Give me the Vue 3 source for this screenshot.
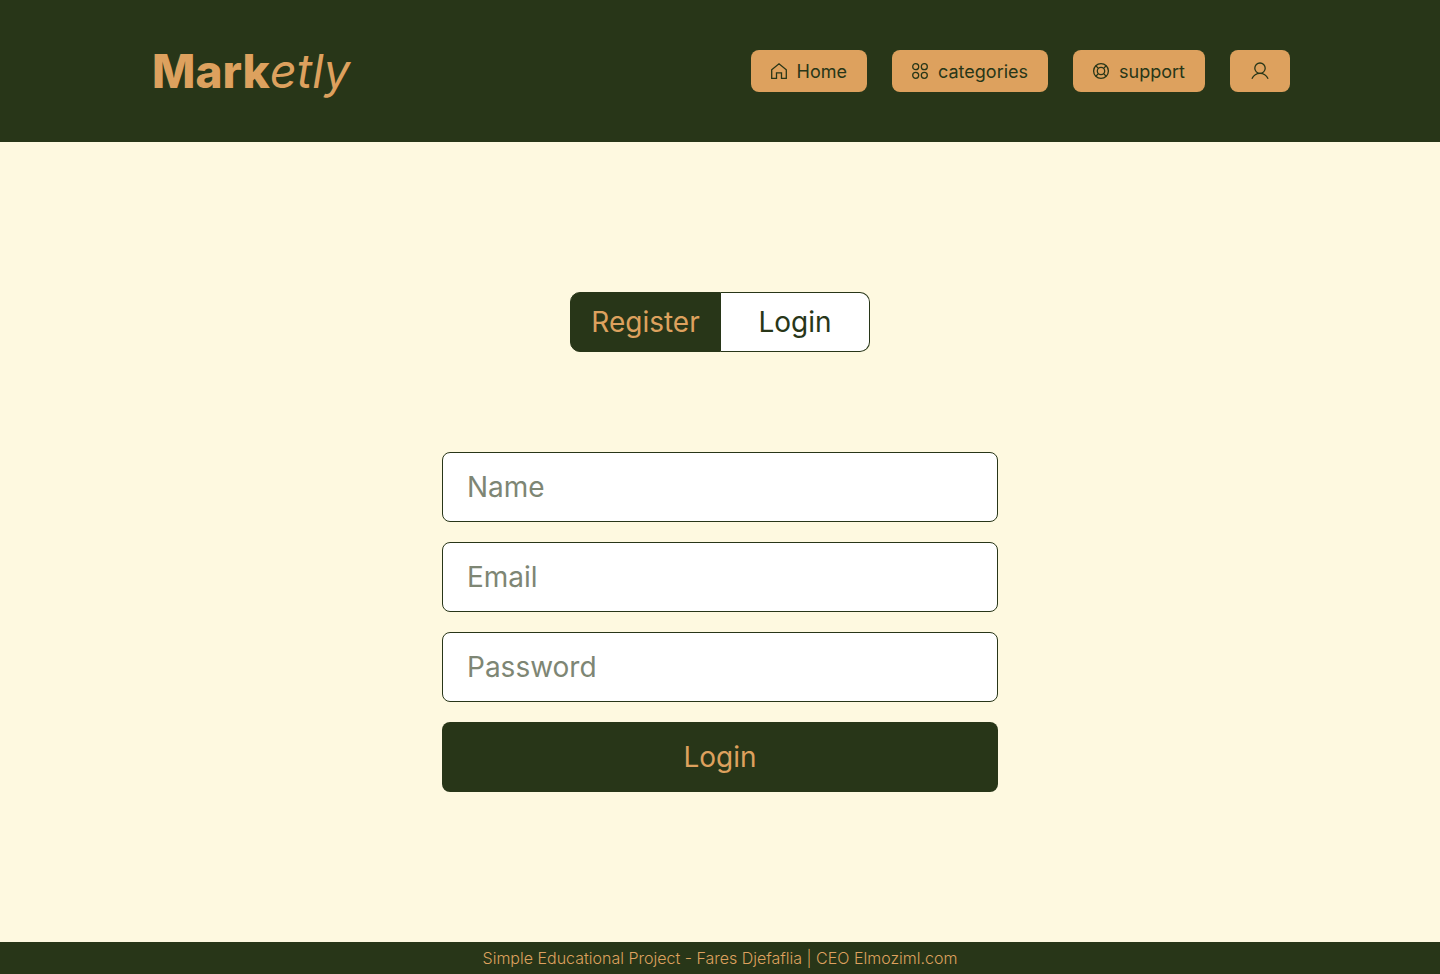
<script setup>
import { ref } from 'vue'
const mode = ref('register')
</script>

<template>
  <div class="page">
    <header class="bar">
      <a class="logo" href="#"><strong>Mark</strong><em>etly</em></a>
      <nav class="nav">
        <a class="pill" href="#">
          <svg viewBox="0 0 16 16"><path d="M.7 6.700 8 .8l7.300 5.900V15.300H10.500V9.800H5.500v5.500H.7Z" /></svg>
          Home
        </a>
        <a class="pill" href="#">
          <svg viewBox="0 0 16 16"><circle cx="3.700" cy="3.700" r="3" /><circle cx="12.300" cy="3.700" r="3" /><circle cx="3.700" cy="12.300" r="3" /><circle cx="12.300" cy="12.300" r="3" /></svg>
          categories
        </a>
        <a class="pill" href="#">
          <svg viewBox="0 0 16 16"><circle cx="8" cy="8" r="7.400" /><circle cx="8" cy="8" r="3.700" /><path d="M2.800 2.800l2.600 2.600M13.200 2.800l-2.600 2.600M2.800 13.200l2.600-2.600M13.200 13.200l-2.600-2.600" /></svg>
          support
        </a>
        <a class="pill account" href="#" aria-label="Account">
          <svg viewBox="0 0 18 18"><circle cx="9" cy="6.200" r="5.200" /><path d="M.9 16.700C2.500 13.500 5.400 11.400 9 11.400s6.500 2.100 8.100 5.300" /></svg>
        </a>
      </nav>
    </header>
    <main class="main">
      <div class="tabs">
        <button type="button" :class="{ active: mode === 'register' }" @click="mode = 'register'">Register</button>
        <button type="button" :class="{ active: mode === 'login' }" @click="mode = 'login'">Login</button>
      </div>
      <form class="form" @submit.prevent>
        <input type="text" placeholder="Name" aria-label="Name" />
        <input type="email" placeholder="Email" aria-label="Email" />
        <input type="password" placeholder="Password" aria-label="Password" />
        <button type="submit">Login</button>
      </form>
    </main>
    <footer class="foot">Simple Educational Project - Fares Djefaflia | CEO Elmoziml.com</footer>
  </div>
</template>

<style>
body { margin: 0; background: #fef9e0; }
</style>

<style scoped>
.page { min-height: 100vh; display: flex; flex-direction: column; background: #fef9e0; color: #283618; font-family: Inter, sans-serif; }
.page *, .page { box-sizing: border-box; }
.bar { display: flex; justify-content: space-between; align-items: center; padding: 40px 150px; background: #283618; }
.logo { padding-left: 2px; color: #dda15e; font-size: 46px; line-height: 62px; text-decoration: none; }
.logo strong { font-weight: 800; }
.logo em { font-size: 47px; font-weight: 400; }
.nav { display: flex; gap: 25px; }
.pill { display: flex; align-items: center; justify-content: center; gap: 10px; padding: 0 20px; height: 42px; border-radius: 8px; background: #dda15e; color: #283618; font-size: 18px; line-height: 23px; text-decoration: none; }
.pill svg { width: 16px; height: 16px; overflow: visible; fill: none; stroke: currentColor; stroke-width: 1.3; }
.account { width: 60px; }
.account svg { width: 18px; height: 18px; }
.main { flex: 1; display: flex; flex-direction: column; align-items: center; gap: 100px; padding: 150px 20px; }
button, input { font: inherit; font-size: 28px; line-height: 34px; }
button { cursor: pointer; }
.tabs { display: grid; grid-template-columns: 151fr 149fr; width: 300px; height: 60px; }
.tabs button { border: 1px solid #283618; padding: 0; background: #fff; color: #283618; }
.tabs button:first-child { border-radius: 10px 0 0 10px; }
.tabs button:last-child { border-left: 0; border-radius: 0 10px 10px 0; }
.tabs .active { background: #283618; color: #dda15e; }
.form { display: flex; flex-direction: column; gap: 20px; width: 100%; max-width: 556px; }
.form input { width: 100%; height: 70px; padding: 0 24px; border: 1px solid #283618; border-radius: 8px; background: #fff; color: #283618; }
.form input::placeholder { color: #7e8674; opacity: 1; }
.form button { height: 70px; border: 0; border-radius: 8px; background: #283618; color: #dda15e; }
.foot { padding: 6px 20px; background: #283618; color: #dda15e; font-size: 16px; line-height: 20px; font-weight: 300; text-align: center; }
</style>
